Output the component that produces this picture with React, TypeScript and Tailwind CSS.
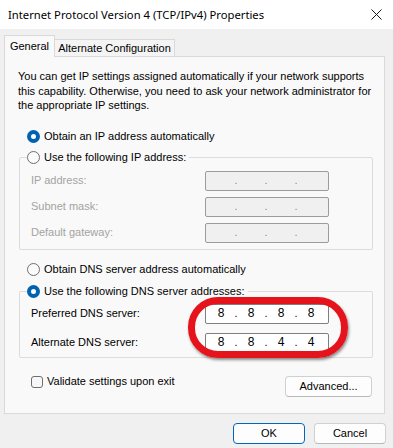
import { type ReactNode } from "react";

// ─── Pieces ──────────────────────────────────────────────────────────────────

function Radio({ checked }: { checked?: boolean }) {
  return checked ? (
    <span className="flex size-[13px] shrink-0 items-center justify-center rounded-full bg-[#0063b1]">
      <span className="block size-[5px] rounded-full bg-white" />
    </span>
  ) : (
    <span className="block size-[13px] shrink-0 rounded-full border border-[#6e6e6e] bg-[#fbfbfb]" />
  );
}

function RadioRow({ checked, label }: { checked?: boolean; label: string }) {
  return (
    <div className="flex h-[14px] items-center gap-[4px]">
      <Radio checked={checked} />
      <span className="whitespace-nowrap text-[11px] leading-none text-black">{label}</span>
    </div>
  );
}

function IpBox({ octets, disabled }: { octets: string[]; disabled?: boolean }) {
  return (
    <div
      className={
        disabled
          ? "flex h-[20px] w-[124px] items-center rounded-[2px] border border-[#9c9c9c] bg-[#f0f0f0] pl-[3px]"
          : "flex h-[20px] w-[124px] items-center rounded-[2px] border border-[#7f7f7f] bg-white pl-[3px]"
      }
    >
      {octets.map((o, i) => (
        <div key={i} className="flex items-center">
          <span className="w-[24px] text-center font-['Liberation_Mono',monospace] text-[12px] leading-none text-black">
            {o}
          </span>
          {i < 3 && (
            <span
              className={
                disabled
                  ? "w-[6px] text-center text-[11px] leading-none text-[#8a8a8a]"
                  : "w-[6px] text-center text-[11px] leading-none text-black"
              }
            >
              .
            </span>
          )}
        </div>
      ))}
    </div>
  );
}

function FieldRow({ label, disabled, children }: { label: string; disabled?: boolean; children: ReactNode }) {
  return (
    <div className="flex h-[20px] items-center">
      <span
        className={
          disabled
            ? "w-[174px] text-[11px] leading-none text-[#a3a3a3]"
            : "w-[174px] text-[11px] leading-none text-black"
        }
      >
        {label}
      </span>
      {children}
    </div>
  );
}

function GroupBox({ legend, checked, className, children }: { legend: string; checked?: boolean; className: string; children: ReactNode }) {
  return (
    <fieldset className={`ml-[14px] mr-[11px] rounded-[2px] border border-[#dcdcdc] p-0 ${className}`}>
      <legend className="ml-[7px] pr-[3px]">
        <RadioRow checked={checked} label={legend} />
      </legend>
      {children}
    </fieldset>
  );
}

function Button({ children, primary, wide }: { children: ReactNode; primary?: boolean; wide?: boolean }) {
  const size = wide ? "w-[87px]" : "w-[72px]";
  const border = primary ? "border-[#0067c0]" : "border-[#d0d0d0] border-b-[#b8b8b8]";
  return (
    <div
      className={`flex h-[21px] ${size} items-center justify-center rounded-[4px] border ${border} bg-[#fdfdfd] font-['Liberation_Sans',sans-serif] text-[11px] text-black`}
    >
      {children}
    </div>
  );
}

// ─── Dialog ──────────────────────────────────────────────────────────────────

export default function App() {
  return (
    <div className="relative h-[448px] w-[394px] overflow-hidden border-r border-[#d6d6d6] bg-[#f0f0f0] font-['Liberation_Sans',sans-serif]">
      {/* Title bar */}
      <div className="flex h-[29px] items-center justify-between bg-white pl-[8px] pr-[11px]">
        <span className="font-['Noto_Sans',sans-serif] text-[11.25px] leading-none text-black">
          Internet Protocol Version 4 (TCP/IPv4) Properties
        </span>
        <svg width="11" height="11" viewBox="0 0 11 11" className="text-[#1a1a1a]">
          <path d="M0.5 0.5 L10.5 10.5 M10.5 0.5 L0.5 10.5" stroke="currentColor" strokeWidth="1" />
        </svg>
      </div>

      <div className="pl-[4px] pr-[8px] pt-[6px]">
        {/* Tabs */}
        <div className="flex h-[21px] items-end">
          <div className="relative z-10 -mb-px flex h-[22px] w-[51px] items-center justify-center whitespace-nowrap border border-b-0 border-[#d9d9d9] bg-[#f9f9f9] text-[11px] text-black">
            General
          </div>
          <div className="flex h-[17px] w-[120px] items-center justify-center whitespace-nowrap border border-b-0 border-l-0 border-[#d9d9d9] bg-[#f4f4f4] text-[11px] text-black">
            Alternate Configuration
          </div>
        </div>

        {/* Panel */}
        <div className="h-[358px] border border-[#d9d9d9] bg-[#f9f9f9]">
          <p className="pl-[13px] pr-[10px] pt-[12px] text-[11px] leading-[14.5px] text-black">
            You can get IP settings assigned automatically if your network supports this capability. Otherwise, you need to ask your network administrator for the appropriate IP settings.
          </p>

          <div className="mt-[17px] pl-[22px]">
            <RadioRow checked label="Obtain an IP address automatically" />
          </div>

          <GroupBox legend="Use the following IP address:" className="mt-[7px]">
            <div className="flex flex-col gap-[6px] pb-[6px] pl-[11px] pt-[6px]">
              <FieldRow label="IP address:" disabled>
                <IpBox octets={["", "", "", ""]} disabled />
              </FieldRow>
              <FieldRow label="Subnet mask:" disabled>
                <IpBox octets={["", "", "", ""]} disabled />
              </FieldRow>
              <FieldRow label="Default gateway:" disabled>
                <IpBox octets={["", "", "", ""]} disabled />
              </FieldRow>
            </div>
          </GroupBox>

          <div className="mt-[13px] pl-[22px]">
            <RadioRow label="Obtain DNS server address automatically" />
          </div>

          <GroupBox legend="Use the following DNS server addresses:" checked className="mt-[8px]">
            <div className="flex flex-col gap-[9px] pb-[4px] pl-[11px] pt-[5px]">
              <FieldRow label="Preferred DNS server:">
                <IpBox octets={["8", "8", "8", "8"]} />
              </FieldRow>
              <FieldRow label="Alternate DNS server:">
                <IpBox octets={["8", "8", "4", "4"]} />
              </FieldRow>
            </div>
          </GroupBox>

          <div className="mt-[18px] flex items-start justify-between pl-[26px] pr-[12px]">
            <div className="flex items-center gap-[4px]">
              <span className="block size-[12px] rounded-[3px] border border-[#6e6e6e] bg-[#f7f7f7]" />
              <span className="text-[11px] leading-none text-black">Validate settings upon exit</span>
            </div>
            <Button wide>Advanced...</Button>
          </div>
        </div>

        {/* Footer buttons */}
        <div className="-mr-px mt-[9px] flex justify-end gap-[9px]">
          <Button primary>OK</Button>
          <Button>Cancel</Button>
        </div>
      </div>

      {/* Red highlight drawn over the DNS fields */}
      <div className="pointer-events-none absolute left-[188px] top-[297px] h-[61px] w-[160px] rounded-[30px] border-[7px] border-[#e5131b] shadow-[1px_2px_3px_rgba(0,0,0,0.45)]" />
    </div>
  );
}
